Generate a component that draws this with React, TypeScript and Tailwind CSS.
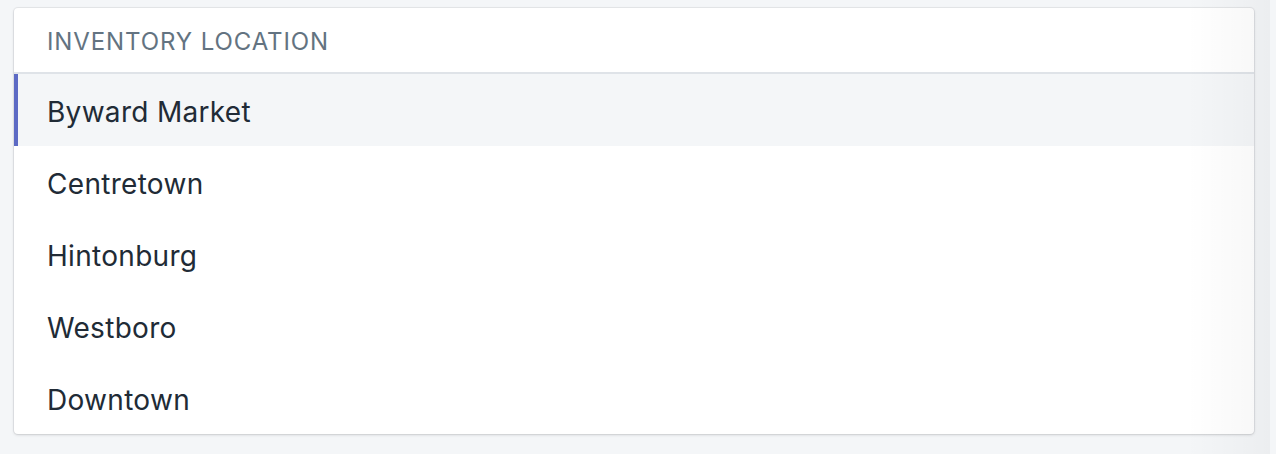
import React from "react";

const items = ["Byward Market", "Centretown", "Hintonburg", "Westboro", "Downtown"];

export default function App() {
  return (
    <div
      className="relative w-[1276px] h-[454px] bg-[#f4f6f8] pt-[8px] pl-[14px] overflow-hidden"
      style={{ fontFamily: 'Inter, "Noto Sans", sans-serif' }}
    >
      <div className="w-[1240px] h-[426px] bg-white rounded-[4px] shadow-[0_0_0_1px_rgba(63,63,68,0.07),0_1px_3px_0_rgba(63,63,68,0.18)] overflow-hidden">
        <div className="h-[66px] flex items-center pt-[3px] pl-[33px] border-b-2 border-[#dfe3e8] text-[24px] text-[#637381] tracking-[0.9px] uppercase">
          Inventory Location
        </div>
        {items.map((it, i) => (
          <div
            key={it}
            className={
              i === 0
                ? "h-[72px] flex items-center pt-[3px] pl-[29px] border-l-[4px] border-[#5c6ac4] bg-[#f4f6f8] text-[28px] tracking-[0.3px] text-[#212b36]"
                : "h-[72px] flex items-center pt-[3px] pl-[33px] text-[28px] tracking-[0.3px] text-[#212b36]"
            }
          >
            {it}
          </div>
        ))}
      </div>
      <div className="absolute top-0 right-0 w-[90px] h-[454px] pointer-events-none bg-gradient-to-r from-transparent to-[rgba(0,0,0,0.035)]" />
      <div className="absolute top-0 right-0 w-[6px] h-[454px] bg-[#f4f6f8]" />
    </div>
  );
}
